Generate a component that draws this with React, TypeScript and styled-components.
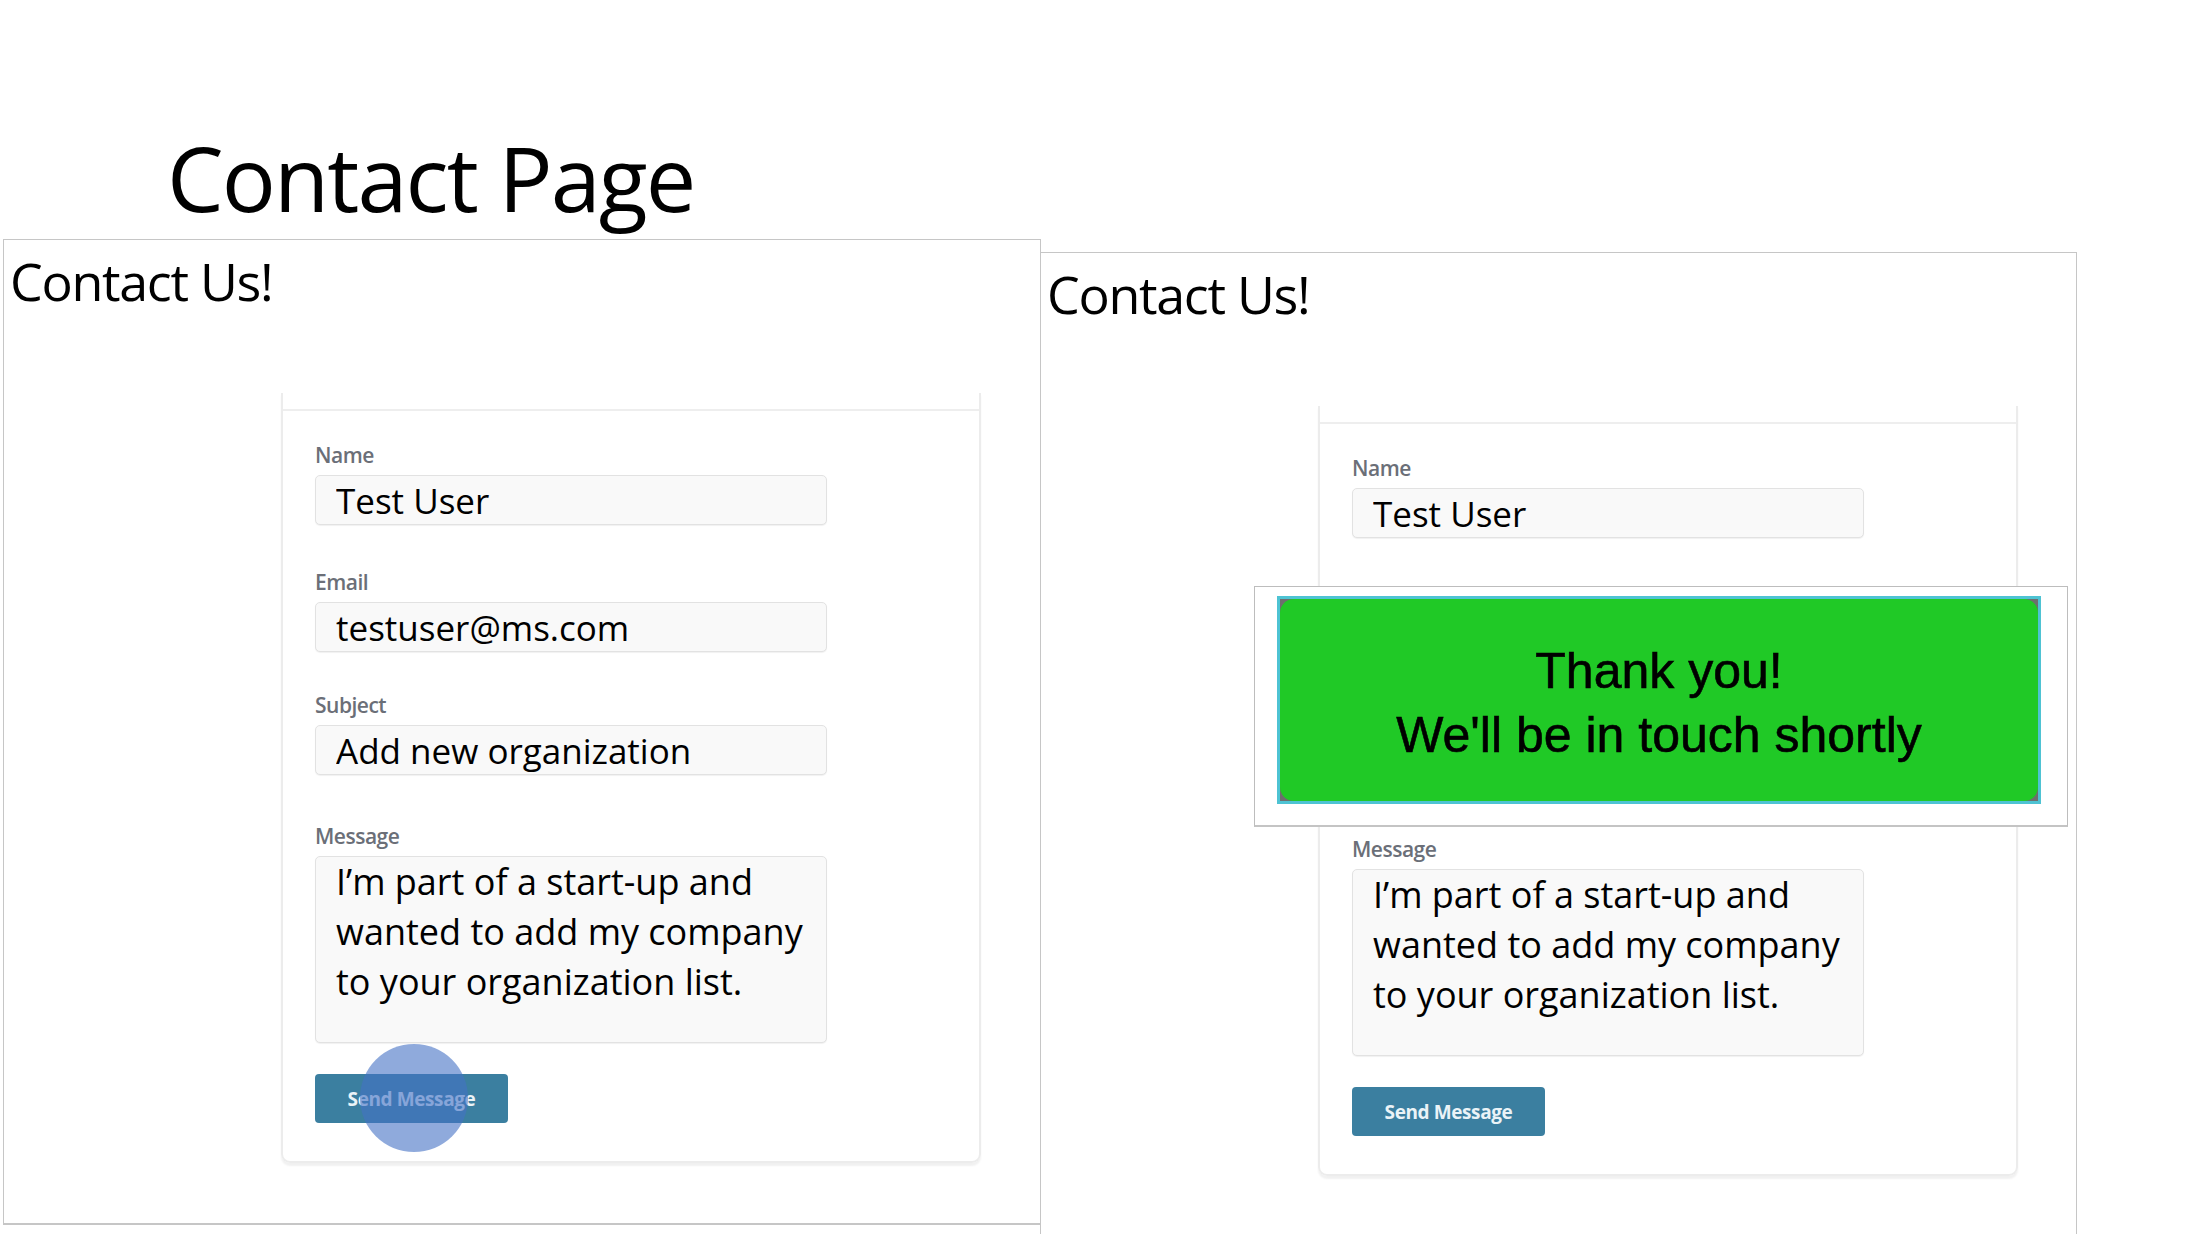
import styled, { createGlobalStyle } from "styled-components";

const GlobalStyle = createGlobalStyle`
  html, body {
    margin: 0;
    padding: 0;
    background: #ffffff;
    overflow: hidden;
  }
  body {
    font-family: "Open Sans", "Noto Sans", sans-serif;
    color: #000;
  }
`;

const Page = styled.div`
  width: 2192px;
  height: 1234px;
  overflow: hidden;
`;

const SlideTitle = styled.h1`
  margin: 0;
  padding: 123px 0 0 167px;
  font-family: "Open Sans", sans-serif;
  font-weight: 400;
  font-size: 90px;
  line-height: 108px;
  letter-spacing: -1.9px;
  color: #000;
`;

const PanelRow = styled.div`
  display: flex;
  align-items: flex-start;
  margin-top: 8px;
`;

const Panel = styled.section<{ $shift: number; $open?: boolean }>`
  position: relative;
  box-sizing: border-box;
  width: ${(p) => (p.$open ? 1037 : 1038)}px;
  height: ${(p) => (p.$open ? 1000 : 986)}px;
  margin-top: ${(p) => p.$shift}px;
  margin-left: ${(p) => (p.$open ? -1 : 3)}px;
  padding-top: 11px;
  border: 1px solid #c6c6c6;
  border-bottom: ${(p) => (p.$open ? "none" : "2px solid #c6c6c6")};
  background: #fff;
`;

const PanelHeading = styled.h2`
  margin: 0;
  padding-left: 6px;
  font-size: 52px;
  font-weight: 400;
  line-height: 60px;
  letter-spacing: -1.3px;
`;

const Card = styled.div`
  box-sizing: border-box;
  width: 700px;
  margin: 82px 0 0 277px;
  border: 2px solid #ececec;
  border-top: none;
  border-radius: 0 0 9px 9px;
  box-shadow: 0 3px 2px rgba(0, 0, 0, 0.06);
`;

const CardHeader = styled.div`
  height: 16px;
  border-bottom: 2px solid #eeeeee;
`;

const CardBody = styled.form`
  padding: 30px 32px 38px;
`;

const Field = styled.div<{ $gapBelow: number }>`
  margin-bottom: ${(p) => p.$gapBelow}px;
`;

const Label = styled.label`
  display: block;
  margin-bottom: 5px;
  font-size: 21px;
  line-height: 29px;
  font-weight: 600;
  color: #6b6f78;
  letter-spacing: -0.5px;
`;

const TextInput = styled.input`
  box-sizing: border-box;
  display: block;
  width: 512px;
  height: 50px;
  padding: 0 20px;
  border: 1px solid #e2e2e2;
  border-radius: 5px;
  background: #f9f9f9;
  box-shadow: 0 1px 1px rgba(0, 0, 0, 0.06);
  font-family: "Open Sans", sans-serif;
  font-size: 35px;
  color: #000;
  outline: none;
`;

const MessageBox = styled.textarea`
  box-sizing: border-box;
  display: block;
  width: 512px;
  height: 187px;
  margin-bottom: 31px;
  padding: 0 20px;
  border: 1px solid #e2e2e2;
  border-radius: 5px;
  background: #f9f9f9;
  box-shadow: 0 1px 1px rgba(0, 0, 0, 0.06);
  font-family: "Open Sans", sans-serif;
  font-size: 36px;
  line-height: 50px;
  color: #000;
  resize: none;
  overflow: hidden;
  outline: none;
`;

const ButtonWrap = styled.div`
  position: relative;
  width: 193px;
  height: 49px;
`;

const SendButton = styled.button`
  width: 193px;
  height: 49px;
  border: none;
  border-radius: 4px;
  background: #3b7fa0;
  color: #eaf3f7;
  font-family: "Open Sans", sans-serif;
  font-size: 19px;
  font-weight: 700;
  letter-spacing: -0.4px;
  cursor: pointer;
`;

const ClickMarker = styled.span`
  position: absolute;
  left: 45px;
  top: -30px;
  width: 108px;
  height: 108px;
  border-radius: 50%;
  background: rgba(68, 114, 196, 0.6);
  pointer-events: none;
`;

const ToastFrame = styled.div`
  position: absolute;
  left: 213px;
  top: 333px;
  box-sizing: border-box;
  width: 814px;
  height: 241px;
  padding: 9px 26px 0 22px;
  background: #fff;
  border: 1px solid #bdbdbd;
  border-bottom: 2px solid #c4c4c4;
`;

const ToastEdge = styled.div`
  box-sizing: border-box;
  height: 208px;
  border: 3px solid #4ec3d3;
  background: #6e6e6e;
`;

const ToastBody = styled.div`
  height: 100%;
  border-radius: 14px;
  background: #20c926;
  display: flex;
  flex-direction: column;
  align-items: center;
  justify-content: center;
  padding-top: 6px;
  box-sizing: border-box;
  font-family: "Liberation Sans", Arial, sans-serif;
  font-size: 50px;
  line-height: 64px;
  color: #000;
  -webkit-text-stroke: 0.6px #000;
`;

const message =
  "I’m part of a start-up and\nwanted to add my company\nto your organization list.";

function ContactScreen({ clicked, sent }: { clicked?: boolean; sent?: boolean }) {
  return (
    <Panel $shift={sent ? 13 : 0} $open={sent}>
      <PanelHeading>Contact Us!</PanelHeading>
      <Card>
        <CardHeader />
        <CardBody onSubmit={(e) => e.preventDefault()}>
          <Field $gapBelow={43}>
            <Label>Name</Label>
            <TextInput readOnly value="Test User" />
          </Field>
          <Field $gapBelow={39}>
            <Label>Email</Label>
            <TextInput readOnly value="testuser@ms.com" />
          </Field>
          <Field $gapBelow={47}>
            <Label>Subject</Label>
            <TextInput readOnly value="Add new organization" />
          </Field>
          <Label>Message</Label>
          <MessageBox readOnly value={message} />
          <ButtonWrap>
            <SendButton type="submit">Send Message</SendButton>
            {clicked && <ClickMarker />}
          </ButtonWrap>
        </CardBody>
      </Card>
      {sent && (
        <ToastFrame>
          <ToastEdge>
            <ToastBody>
              <div>Thank you!</div>
              <div>We'll be in touch shortly</div>
            </ToastBody>
          </ToastEdge>
        </ToastFrame>
      )}
    </Panel>
  );
}

export default function App() {
  return (
    <Page>
      <GlobalStyle />
      <SlideTitle>Contact Page</SlideTitle>
      <PanelRow>
        <ContactScreen clicked />
        <ContactScreen sent />
      </PanelRow>
    </Page>
  );
}
